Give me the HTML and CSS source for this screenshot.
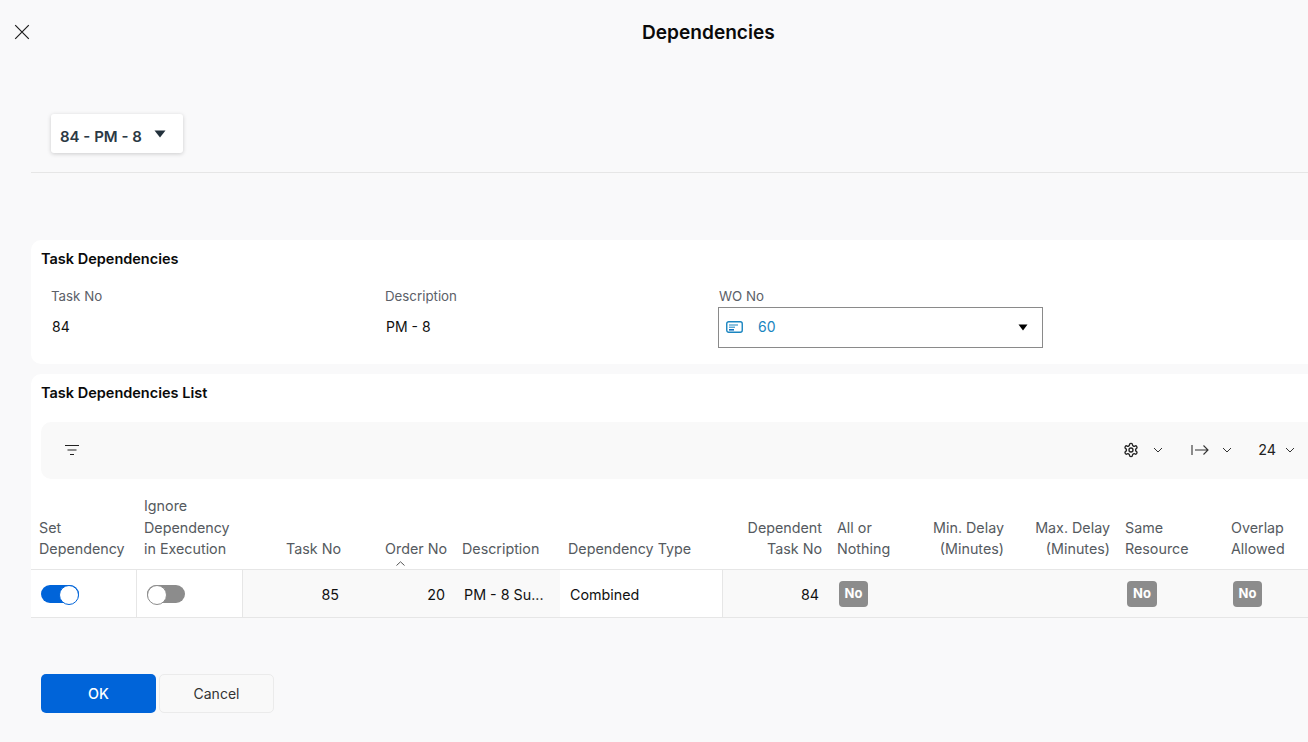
FILE: index.html
```html
<!DOCTYPE html>
<html lang="en">
<head>
<meta charset="utf-8">
<title>Dependencies</title>
<link rel="stylesheet" href="styles.css">
</head>
<body>
<header class="topbar">
  <button class="close" aria-label="Close">
    <svg width="16" height="16" viewBox="0 0 16 16"><path d="M1.2 1.2 14.8 14.8M14.8 1.2 1.2 14.8" fill="none" stroke="#1c1c1c" stroke-width="1.2"/></svg>
  </button>
  <h1 class="title">Dependencies</h1>
</header>
<main class="main">
  <div class="selector-bar">
    <div class="selector">
      <span class="selector-text">84 - PM - 8</span>
      <svg class="selector-caret" width="12" height="8" viewBox="0 0 12 8"><path d="M0.5 0.5h11L6 7.500z" fill="#22303c"/></svg>
    </div>
  </div>

  <section class="panel panel-form">
    <h2 class="panel-title">Task Dependencies</h2>
    <div class="form-grid">
      <div class="field field-task">
        <div class="label">Task No</div>
        <div class="value">84</div>
      </div>
      <div class="field field-desc">
        <div class="label">Description</div>
        <div class="value">PM - 8</div>
      </div>
      <div class="field field-wo">
        <div class="label">WO No</div>
        <div class="lookup">
          <svg width="17" height="12" viewBox="0 0 17 12"><rect x="0.75" y="0.75" width="15.5" height="10.5" rx="2" fill="none" stroke="#1a85c0" stroke-width="1.4"/><path d="M3 4h9M3 6.200h6" stroke="#1a85c0" stroke-width="1"/><path d="M3 8.800h5" stroke="#0f6fc0" stroke-width="1.6"/></svg>
          <span class="lookup-text">60</span>
          <svg class="lookup-caret" width="10" height="7" viewBox="0 0 10 7"><path d="M0.5 0.5h9L5 6.500z" fill="#000"/></svg>
        </div>
      </div>
    </div>
  </section>

  <section class="panel panel-list">
    <h2 class="panel-title">Task Dependencies List</h2>
    <div class="toolbar">
      <svg class="filter" width="16" height="12" viewBox="0 0 16 12"><path d="M1 1.500h14M3.500 6h9M6 10.500h4" stroke="#222" stroke-width="1.2" fill="none"/></svg>
      <div class="tools">
        <svg width="16" height="16" viewBox="0 0 24 24" fill="none" stroke="#222" stroke-width="2" stroke-linecap="round" stroke-linejoin="round"><path d="M12.220 2h-.44a2 2 0 0 0-2 2v.18a2 2 0 0 1-1 1.730l-.43.25a2 2 0 0 1-2 0l-.15-.08a2 2 0 0 0-2.730.73l-.22.38a2 2 0 0 0 .73 2.730l.15.1a2 2 0 0 1 1 1.720v.51a2 2 0 0 1-1 1.740l-.15.09a2 2 0 0 0-.73 2.730l.22.38a2 2 0 0 0 2.730.73l.15-.08a2 2 0 0 1 2 0l.43.25a2 2 0 0 1 1 1.730V20a2 2 0 0 0 2 2h.44a2 2 0 0 0 2-2v-.18a2 2 0 0 1 1-1.730l.43-.25a2 2 0 0 1 2 0l.15.08a2 2 0 0 0 2.730-.73l.22-.39a2 2 0 0 0-.73-2.730l-.15-.08a2 2 0 0 1-1-1.740v-.5a2 2 0 0 1 1-1.740l.15-.09a2 2 0 0 0 .73-2.730l-.22-.38a2 2 0 0 0-2.730-.73l-.15.08a2 2 0 0 1-2 0l-.43-.25a2 2 0 0 1-1-1.730V4a2 2 0 0 0-2-2z"/><circle cx="12" cy="12" r="3"/></svg>
        <svg class="chev chev-a" width="10" height="6" viewBox="0 0 10 6"><path d="M1 1l4 4 4-4" fill="none" stroke="#333" stroke-width="1"/></svg>
        <svg class="arrow" width="18" height="12" viewBox="0 0 18 12"><path d="M1 1v10M4 6h13M12.500 1.500 17 6l-4.500 4.500" fill="none" stroke="#333" stroke-width="1.100"/></svg>
        <svg class="chev chev-b" width="10" height="6" viewBox="0 0 10 6"><path d="M1 1l4 4 4-4" fill="none" stroke="#333" stroke-width="1"/></svg>
        <span class="count">24</span>
        <svg class="chev chev-c" width="10" height="6" viewBox="0 0 10 6"><path d="M1 1l4 4 4-4" fill="none" stroke="#333" stroke-width="1"/></svg>
      </div>
    </div>
    <table class="grid">
      <colgroup>
        <col class="c105"><col class="c106"><col class="c106"><col class="c106"><col class="c106"><col class="c162"><col class="c107"><col class="c76"><col class="c106"><col class="c106"><col class="c106"><col class="c106">
      </colgroup>
      <thead>
        <tr>
          <th>Set<br>Dependency</th>
          <th>Ignore<br>Dependency<br>in Execution</th>
          <th class="num">Task No</th>
          <th class="num sorted">Order No<svg class="sort" width="9" height="5" viewBox="0 0 9 5"><path d="M.5 4.500 4.500 .8l4 3.700" fill="none" stroke="#555" stroke-width="1"/></svg></th>
          <th>Description</th>
          <th>Dependency Type</th>
          <th class="num">Dependent<br>Task No</th>
          <th>All or<br>Nothing</th>
          <th class="num">Min. Delay<br>(Minutes)</th>
          <th class="num">Max. Delay<br>(Minutes)</th>
          <th>Same<br>Resource</th>
          <th>Overlap<br>Allowed</th>
        </tr>
      </thead>
      <tbody>
        <tr>
          <td class="white sep"><span class="toggle on"></span></td>
          <td class="white sep"><span class="toggle off"></span></td>
          <td class="num">85</td>
          <td class="num">20</td>
          <td class="desc">PM - 8 Su...</td>
          <td class="white sep type">Combined</td>
          <td class="num dep">84</td>
          <td class="tight"><span class="badge">No</span></td>
          <td></td>
          <td></td>
          <td class="tight"><span class="badge wide">No</span></td>
          <td class="tight"><span class="badge">No</span></td>
        </tr>
      </tbody>
    </table>
  </section>

  <div class="actions">
    <button class="btn primary">OK</button>
    <button class="btn secondary">Cancel</button>
  </div>
</main>
</body>
</html>
```

FILE: styles.css
```css
* { box-sizing: border-box; }
html, body { margin: 0; height: 100%; }
body {
  width: 1308px;
  height: 742px;
  overflow: hidden;
  background: #f9f9fa;
  font-family: Inter, "Liberation Sans", sans-serif;
  font-size: 14px;
  color: #111;
}
.topbar {
  height: 64px;
  display: flex;
  align-items: center;
  padding-left: 14px;
}
.close {
  background: none;
  border: 0;
  padding: 0;
  width: 16px;
  height: 16px;
  display: block;
}
.close svg { display: block; }
.title {
  margin: 0 0 0 612px;
  font-size: 19.100px;
  font-weight: 600;
  color: #0a0a0a;
  line-height: 24px;
}
.main { margin-left: 31px; width: 1300px; }
.selector-bar {
  height: 109px;
  padding: 50px 0 0 20px;
  border-bottom: 1px solid #e6e6e6;
}
.selector {
  width: 132px;
  height: 39px;
  background: #fff;
  border-radius: 3px;
  box-shadow: 0 1px 4px rgba(0,0,0,.18);
  display: flex;
  align-items: center;
  padding-left: 9px;
  font-size: 15px;
  font-weight: 600;
  color: #2b3944;
}
.selector-text { margin-top: 5px; }
.selector-caret { margin: 1px 0 0 12px; }
.panel { background: #fff; border-radius: 10px 0 0 10px; }
.panel-form { margin-top: 67px; height: 124px; padding: 10px 0 0 10px; }
.panel-list { margin-top: 10px; height: 244px; padding-top: 10px; }
.panel-title {
  margin: 0;
  font-size: 14.500px;
  font-weight: 600;
  line-height: 18px;
  color: #0a0a0a;
}
.panel-list .panel-title { margin-left: 10px; }
.form-grid {
  display: grid;
  grid-template-columns: 334px 333px 325px;
  margin: 20px 0 0 10px;
}
.label { color: #5b6068; line-height: 16px; font-size: 13.300px; }
.field-wo .label { padding-left: 1px; }
.value { margin-top: 14px; line-height: 18px; color: #111; }
.field-desc .value, .field-task .value { padding-left: 1px; }
.lookup {
  width: 325px;
  height: 41px;
  margin-top: 3px;
  border: 1px solid #8a8a8a;
  display: flex;
  align-items: center;
  padding-left: 7px;
  padding-bottom: 2px;
  background: #fff;
}
.lookup-text { margin-left: 15px; color: #1a85c0; }
.lookup-caret { margin-left: auto; margin-right: 14px; margin-top: 2px; }
.toolbar {
  margin: 20px 0 0 10px;
  height: 57px;
  background: #f9f9f9;
  border-radius: 10px 0 0 10px;
  display: flex;
  align-items: center;
  padding: 0 0 2px 23px;
  width: 1290px;
}
.filter { flex: none; }
.tools { margin-left: auto; display: flex; align-items: center; padding-right: 36px; }
.chev-a { margin-left: 14px; }
.arrow { margin-left: 28px; }
.chev-b { margin-left: 13px; }
.count { margin-left: 26px; color: #222; font-size: 14.300px; }
.chev-c { margin-left: 9px; }
.grid {
  margin-top: 11px;
  table-layout: fixed;
  border-collapse: collapse;
  width: 1298px;
  font-size: 14.300px;
}
.c105 { width: 105px; }
.c106 { width: 106px; }
.c107 { width: 107px; }
.c162 { width: 162px; }
.c76 { width: 76px; }
.grid th {
  height: 79px;
  vertical-align: bottom;
  text-align: left;
  font-weight: 400;
  color: #555a60;
  line-height: 21.500px;
  padding: 0 7px 9px 8px;
  border-bottom: 1px solid #e6e6e6;
  background: #fff;
  position: relative;
}
.grid th.num { text-align: right; }
.sort { position: absolute; right: 49px; bottom: 3px; }
.grid td {
  height: 48px;
  padding: 2px 7px 0;
  background: #f9f9f9;
  border-bottom: 1px solid #e6e6e6;
  color: #111;
  white-space: nowrap;
}
.grid td.num { text-align: right; padding-right: 9px; }
.grid td.dep { padding-right: 10px; }
.grid td.white { background: #fff; }
.grid td.sep { border-right: 1px solid #e6e6e6; }
.grid td.desc { padding-left: 10px; }
.grid td.type { padding-left: 10px; }
.grid td.tight { padding-left: 8px; }
.toggle {
  display: block;
  width: 38px;
  height: 18px;
  margin-left: 3px;
  border-radius: 9px;
  position: relative;
}
.toggle::after {
  content: "";
  position: absolute;
  top: 0;
  width: 18px;
  height: 18px;
  border-radius: 50%;
  background: #fff;
  border: 1px solid transparent;
}
.toggle.on { background: #0064d9; }
.toggle.on::after { right: 0; border-color: #0064d9; }
.toggle.off { background: #8c8c8c; }
.toggle.off::after { left: 0; border-color: #8c8c8c; }
.badge {
  display: inline-flex;
  align-items: center;
  justify-content: center;
  width: 29px;
  height: 26px;
  margin-left: 2px;
  padding-bottom: 2px;
  background: #8c8c8c;
  border-radius: 4px;
  color: #fff;
  font-size: 13px;
  font-weight: 700;
  vertical-align: middle;
}
.badge.wide { width: 30px; }
.actions { display: flex; gap: 3px; margin: 56px 0 0 10px; }
.btn {
  width: 115px;
  height: 39px;
  border-radius: 5px;
  font-family: inherit;
  font-size: 14px;
  padding: 0;
}
.primary { background: #0064d9; border: 0; color: #fff; font-weight: 500; font-size: 14.300px; }
.secondary { background: #f9f9f9; border: 1px solid #ebebeb; color: #333; }
```
